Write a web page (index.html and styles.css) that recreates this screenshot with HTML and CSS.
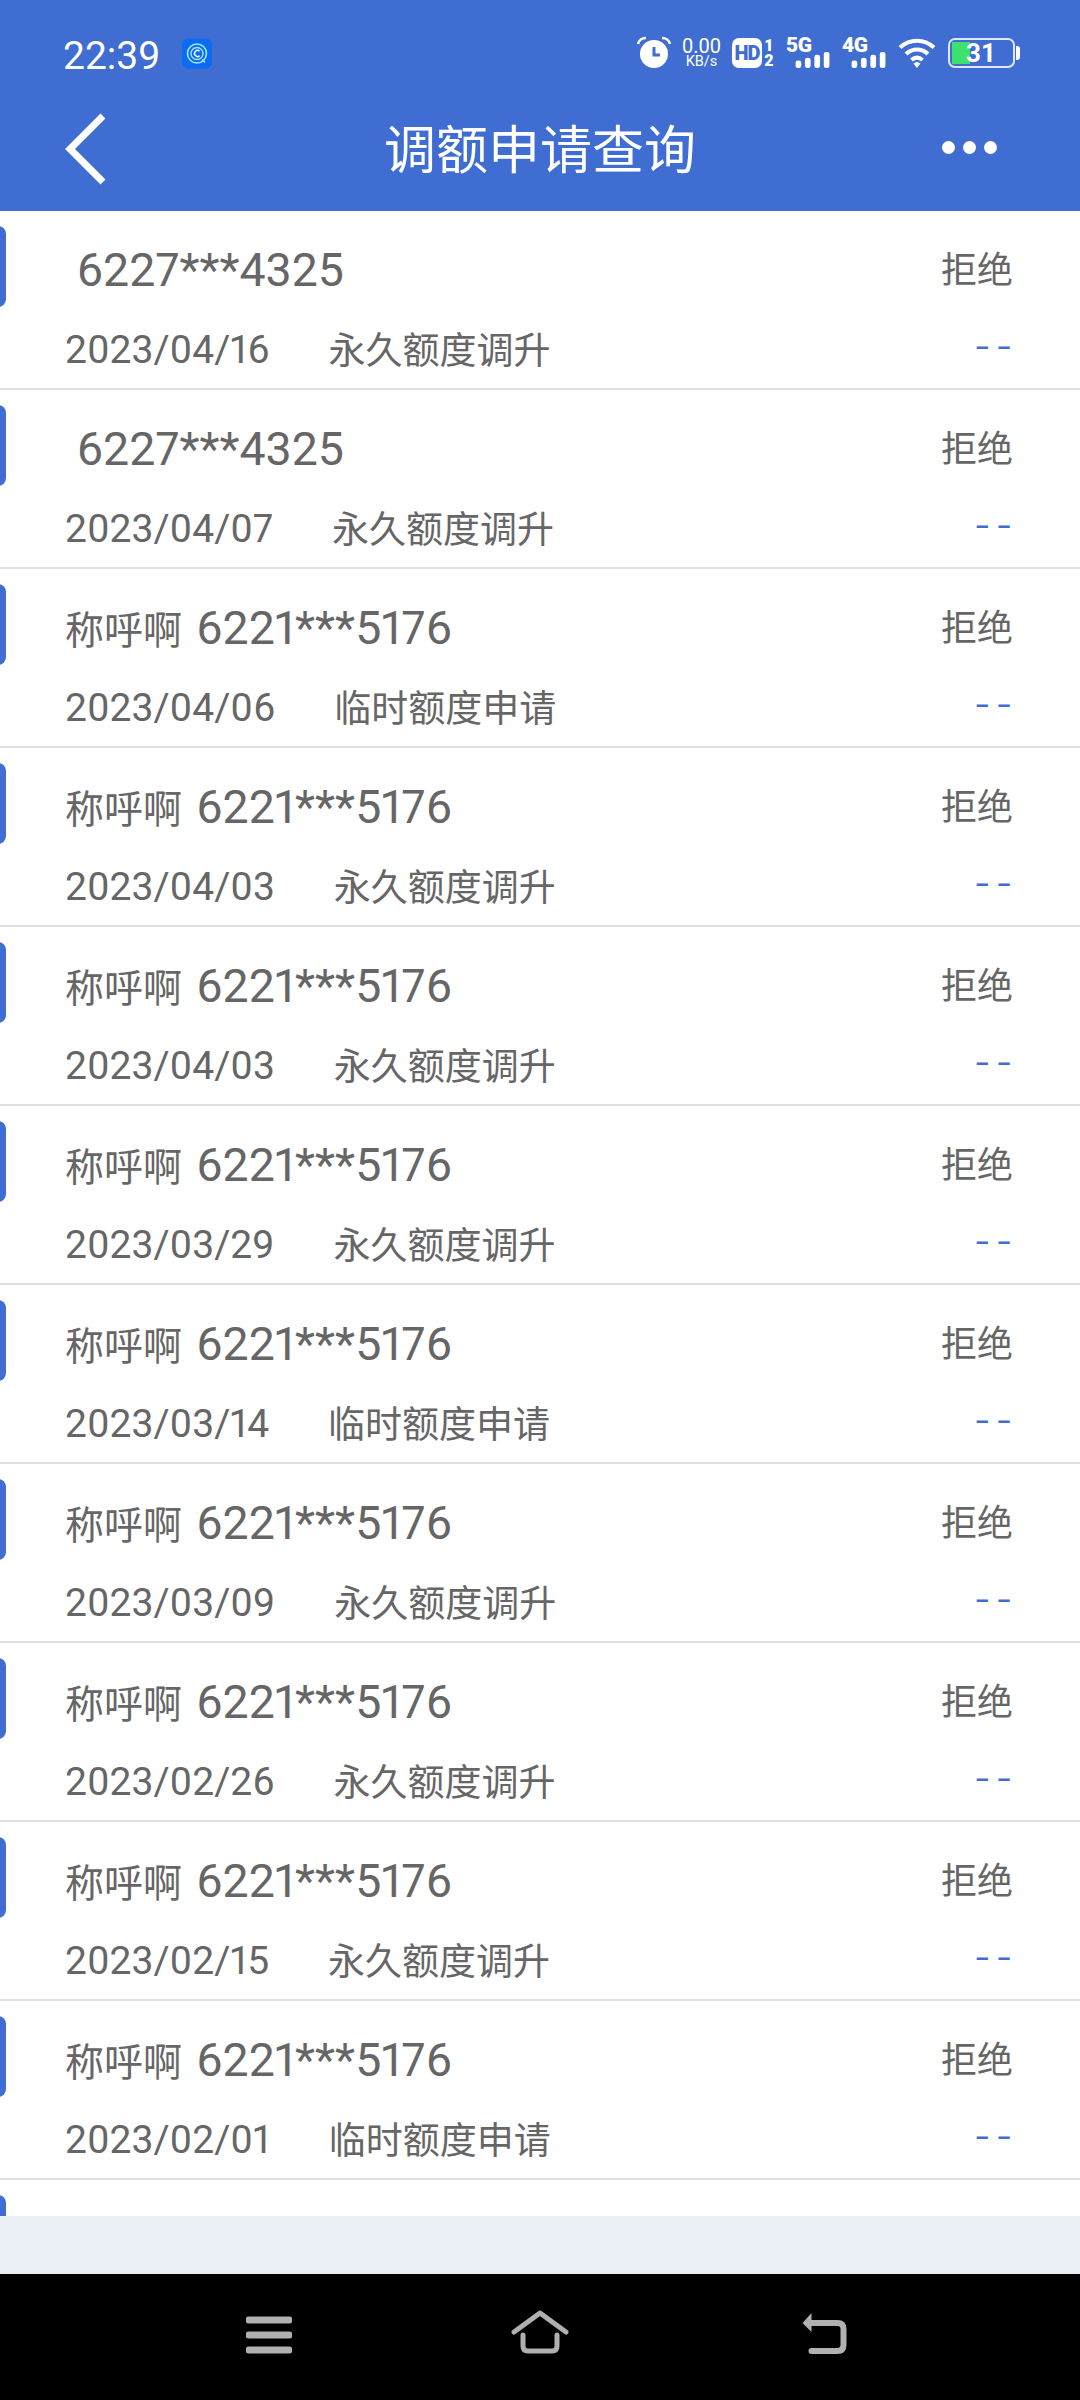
FILE: index.html
```html
<!DOCTYPE html>
<html lang="zh">
<head>
<meta charset="utf-8">
<title>调额申请查询</title>
<link rel="stylesheet" href="styles.css">
</head>
<body>
<div class="screen">
  <header class="top">
    <div class="status">
      <span class="time">22:39</span>
      <svg class="app-icon" viewBox="0 0 30 30"><rect width="30" height="30" rx="6" fill="#0b6cf2"/><circle cx="15" cy="15" r="9.5" fill="none" stroke="#9be8ff" stroke-width="1.6"/><circle cx="15" cy="15" r="6" fill="none" stroke="#9be8ff" stroke-width="1.4"/><path d="M17.6 12.8a3 3 0 1 0 0 4.4" fill="none" stroke="#fff" stroke-width="1.4"/><path d="M20 21l3 3" stroke="#9be8ff" stroke-width="1.6"/></svg>
      <div class="indicators">
        <svg class="alarm" viewBox="0 0 34 34"><circle cx="17" cy="18" r="14" fill="#fff"/><path d="M17 11v8h6" fill="none" stroke="#3f6dd2" stroke-width="3"/><path d="M1 8a8 8 0 0 1 8-6M33 8a8 8 0 0 0-8-6" fill="none" stroke="#fff" stroke-width="2.6"/></svg>
        <div class="speed"><span class="speed-num">0.00</span><span class="speed-unit">KB/s</span></div>
        <div class="hd-group">
          <span class="hd">HD</span>
          <div class="sim"><span>1</span><span>2</span></div>
        </div>
        <div class="net"><span class="net-label">5G</span><svg class="bars" viewBox="0 0 36 17"><rect x="0" y="9" width="6" height="8" rx="2.5"/><rect x="10" y="6" width="6" height="11" rx="2.5"/><rect x="20" y="3" width="6" height="14" rx="2.5"/><rect x="30" y="0" width="6" height="17" rx="2.5"/></svg></div>
        <div class="net"><span class="net-label">4G</span><svg class="bars" viewBox="0 0 36 17"><rect x="0" y="9" width="6" height="8" rx="2.5"/><rect x="10" y="6" width="6" height="11" rx="2.5"/><rect x="20" y="3" width="6" height="14" rx="2.5"/><rect x="30" y="0" width="6" height="17" rx="2.5"/></svg></div>
        <svg class="wifi" viewBox="0 0 38 31"><path d="M2 10.500C12 1.500 26 1.500 36 10.500M8 17C14.500 11 23.500 11 30 17M13.500 23C17 20 21 20 24.500 23" fill="none" stroke="#fff" stroke-width="4.200"/><path d="M15.500 26.500Q19 23.500 22.500 26.500L19 31Z" fill="#fff"/></svg>
        <div class="battery-wrap">
          <div class="battery"><span class="battery-fill"></span><span class="battery-num">31</span></div>
          <span class="battery-cap"></span>
        </div>
      </div>
    </div>
    <div class="titlebar">
      <svg class="back" viewBox="0 0 42 72"><path d="M38 3L5 36l33 33" fill="none" stroke="#fff" stroke-width="7"/></svg>
      <h1 class="title">调额申请查询</h1>
      <div class="more"><i></i><i></i><i></i></div>
    </div>
  </header>

  <main class="list">
    <div class="row"><div class="who"><span class="num">&nbsp;6227***4325</span></div><span class="state">拒绝</span><div class="meta"><span class="date">2023/04/16</span><span class="kind">永久额度调升</span></div><span class="dash">--</span></div>
    <div class="row"><div class="who"><span class="num">&nbsp;6227***4325</span></div><span class="state">拒绝</span><div class="meta"><span class="date">2023/04/07</span><span class="kind">永久额度调升</span></div><span class="dash">--</span></div>
    <div class="row"><div class="who"><span class="name">称呼啊</span><span class="num">6221***5176</span></div><span class="state">拒绝</span><div class="meta"><span class="date">2023/04/06</span><span class="kind">临时额度申请</span></div><span class="dash">--</span></div>
    <div class="row"><div class="who"><span class="name">称呼啊</span><span class="num">6221***5176</span></div><span class="state">拒绝</span><div class="meta"><span class="date">2023/04/03</span><span class="kind">永久额度调升</span></div><span class="dash">--</span></div>
    <div class="row"><div class="who"><span class="name">称呼啊</span><span class="num">6221***5176</span></div><span class="state">拒绝</span><div class="meta"><span class="date">2023/04/03</span><span class="kind">永久额度调升</span></div><span class="dash">--</span></div>
    <div class="row"><div class="who"><span class="name">称呼啊</span><span class="num">6221***5176</span></div><span class="state">拒绝</span><div class="meta"><span class="date">2023/03/29</span><span class="kind">永久额度调升</span></div><span class="dash">--</span></div>
    <div class="row"><div class="who"><span class="name">称呼啊</span><span class="num">6221***5176</span></div><span class="state">拒绝</span><div class="meta"><span class="date">2023/03/14</span><span class="kind">临时额度申请</span></div><span class="dash">--</span></div>
    <div class="row"><div class="who"><span class="name">称呼啊</span><span class="num">6221***5176</span></div><span class="state">拒绝</span><div class="meta"><span class="date">2023/03/09</span><span class="kind">永久额度调升</span></div><span class="dash">--</span></div>
    <div class="row"><div class="who"><span class="name">称呼啊</span><span class="num">6221***5176</span></div><span class="state">拒绝</span><div class="meta"><span class="date">2023/02/26</span><span class="kind">永久额度调升</span></div><span class="dash">--</span></div>
    <div class="row"><div class="who"><span class="name">称呼啊</span><span class="num">6221***5176</span></div><span class="state">拒绝</span><div class="meta"><span class="date">2023/02/15</span><span class="kind">永久额度调升</span></div><span class="dash">--</span></div>
    <div class="row"><div class="who"><span class="name">称呼啊</span><span class="num">6221***5176</span></div><span class="state">拒绝</span><div class="meta"><span class="date">2023/02/01</span><span class="kind">临时额度申请</span></div><span class="dash">--</span></div>
    <div class="row"></div>
  </main>

  <div class="spacer"></div>

  <nav class="sysnav">
    <svg class="nav-menu" viewBox="0 0 46 38"><path d="M3 4h40M3 19h40M3 34h40" fill="none" stroke="#b0b0b0" stroke-width="7" stroke-linecap="round"/></svg>
    <svg class="nav-home" viewBox="0 0 58 44"><path d="M3 22L29 3l26 19" fill="none" stroke="#b0b0b0" stroke-width="5" stroke-linecap="round" stroke-linejoin="round"/><path d="M12 25v11q0 5 5 5h24q5 0 5-5V25" fill="none" stroke="#b0b0b0" stroke-width="5" stroke-linecap="round"/></svg>
    <svg class="nav-back" viewBox="0 0 46 42"><path d="M10 11h26q6 0 6 6v16q0 6-6 6H10" fill="none" stroke="#b0b0b0" stroke-width="6" stroke-linecap="round"/><path d="M1 11L10 1v19Z" fill="#b0b0b0"/></svg>
  </nav>
</div>
</body>
</html>
```

FILE: styles.css
```css
* { box-sizing: border-box; }
html, body { margin: 0; padding: 0; }
body { font-family: Roboto, "Noto Sans CJK SC", sans-serif; background: #000; }
.screen { width: 1080px; height: 2400px; display: flex; flex-direction: column; overflow: hidden; }

.top { height: 211px; flex: none; background: #3f6dd2; color: #fff; }
.status { height: 89px; padding: 16px 60px 0 63px; display: flex; align-items: center; }
.time { font-size: 39px; line-height: 44px; width: 119px; margin-top: 6px; }
.app-icon { width: 30px; height: 31px; margin-top: 2px; }
.indicators { margin-left: auto; display: flex; align-items: center; gap: 12px; height: 32px; }
.alarm { width: 34px; height: 34px; }
.speed { width: 37px; display: flex; flex-direction: column; align-items: center; line-height: 1; }
.speed-num { font-size: 20px; line-height: 18px; }
.speed-unit { font-size: 14.5px; line-height: 14px; white-space: nowrap; }
.hd-group { display: flex; align-items: center; gap: 2px; }
.hd { width: 30px; height: 30px; border-radius: 7px; background: #fff; color: #3f6dd2; font-size: 20px; font-weight: 900; line-height: 30px; text-align: center; letter-spacing: -1px; }
.sim { width: 10px; display: flex; flex-direction: column; align-items: center; font-size: 16px; font-weight: 900; line-height: 15px; }
.net { width: 44px; height: 30px; position: relative; }
.net-label { position: absolute; left: 0; top: -2px; font-size: 21px; font-weight: 900; line-height: 18px; letter-spacing: -0.5px; }
.bars { position: absolute; right: 0; bottom: 0; width: 35px; height: 16px; fill: #fff; }
.wifi { width: 38px; height: 31px; }
.battery-wrap { display: flex; align-items: center; gap: 1px; }
.battery { width: 67px; height: 30px; border: 2px solid #dfe8fb; border-radius: 7px; position: relative; padding: 2px; }
.battery-fill { display: block; width: 18px; height: 100%; background: #3ee06f; }
.battery-num { position: absolute; left: 16px; top: 0; font-size: 26px; line-height: 26px; font-weight: 700; }
.battery-cap { width: 4px; height: 14px; background: #fff; border-radius: 0 3px 3px 0; }

.titlebar { height: 122px; padding: 0 83px 0 65px; display: flex; align-items: center; position: relative; }
.back { width: 42px; height: 72px; margin-top: -2px; }
.title { margin: -6px 0 0; font-size: 52px; font-weight: 400; line-height: 1; font-family: "Noto Sans CJK SC", sans-serif; position: absolute; left: 384px; }
.more { margin-left: auto; display: flex; gap: 8px; margin-top: -6px; }
.more i { display: block; width: 13px; height: 13px; border-radius: 50%; background: #fff; }

.list { flex: 1; min-height: 0; overflow: hidden; background: #fff; }
.row { height: 179px; position: relative; border-bottom: 2px solid #e0e0e0; padding: 16px 67px 0 65px; display: grid; grid-template-columns: 1fr auto; grid-template-rows: 88px 70px; align-items: center; color: #666; }
.row::before { content: ""; position: absolute; left: -10px; top: 15px; width: 16px; height: 81px; background: #3f6dd2; border-radius: 12px; }
.who { display: flex; align-items: center; }
.name { font-size: 39px; margin-right: 14px; margin-bottom: 4px; font-family: "Noto Sans CJK SC", sans-serif; line-height: 1; }
.num { font-size: 46.5px; font-variant-numeric: proportional-nums; line-height: 1; margin-bottom: 2px; }
.state { font-size: 36px; line-height: 1; margin-bottom: 9px; font-family: "Noto Sans CJK SC", sans-serif; }
.meta { display: flex; align-items: center; gap: 59px; }
.date { font-size: 39px; font-variant-numeric: proportional-nums; line-height: 1; }
.kind { font-size: 37px; line-height: 1; margin-bottom: 4px; font-family: "Noto Sans CJK SC", sans-serif; }
.dash { justify-self: end; font-size: 48px; font-weight: 300; line-height: 1; letter-spacing: 8px; margin-right: -6px; margin-bottom: 6px; color: #3f6dd2; }

.spacer { height: 58px; flex: none; background: #ebf0f7; }
.sysnav { height: 126px; flex: none; background: #000; position: relative; }
.nav-menu { position: absolute; left: 246px; top: 42px; width: 46px; height: 38px; }
.nav-home { position: absolute; left: 511px; top: 36px; width: 58px; height: 44px; }
.nav-back { position: absolute; left: 801px; top: 38px; width: 47px; height: 42px; }
```
